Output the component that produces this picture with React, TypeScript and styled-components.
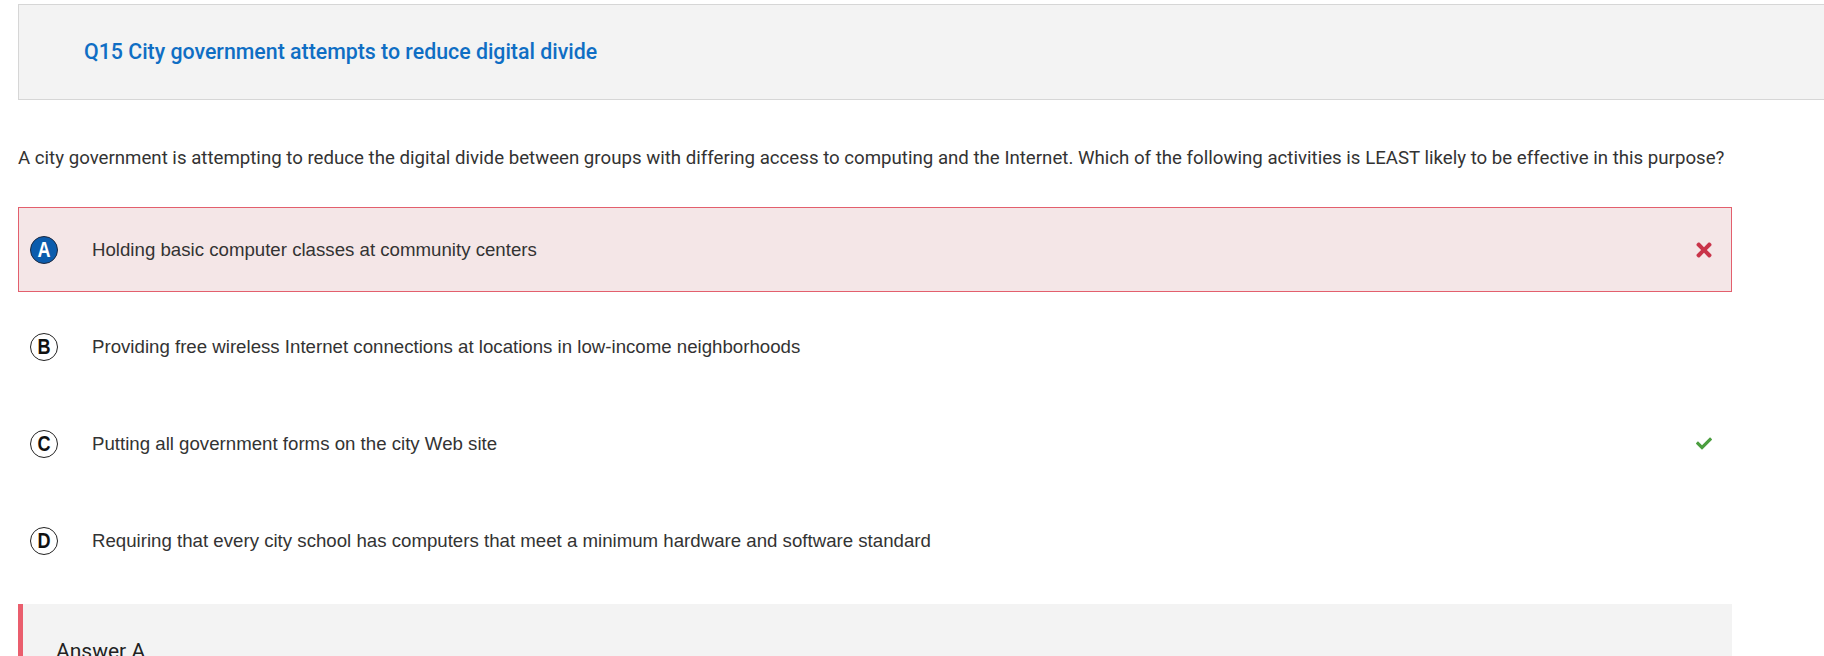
import React from "react";
import styled, { createGlobalStyle } from "styled-components";
import { FaTimes, FaCheck } from "react-icons/fa";

const GlobalStyle = createGlobalStyle`
  html, body {
    margin: 0;
    padding: 0;
    background: #ffffff;
    overflow: hidden;
  }
  body {
    font-family: Roboto, "Liberation Sans", Arial, sans-serif;
  }
`;

const Page = styled.div`
  display: flex;
  flex-direction: column;
  padding: 4px 0 0 18px;
`;

const Header = styled.div`
  display: flex;
  align-items: center;
  height: 94px;
  padding-left: 65px;
  background: #f3f3f3;
  border: 1px solid #d6d6d6;
  border-right: none;
`;

const Title = styled.h1`
  margin: 0;
  font-family: Roboto, "Liberation Sans", sans-serif;
  font-weight: 500;
  font-size: 21.33px;
  line-height: 26px;
  color: #0f6ec4;
`;

const Content = styled.div`
  width: 1714px;
  display: flex;
  flex-direction: column;
`;

const Question = styled.p`
  margin: 45px 0 35px;
  font-family: Roboto, "Liberation Sans", sans-serif;
  font-size: 18.67px;
  line-height: 27px;
  color: #333333;
`;

const OptionList = styled.div`
  display: flex;
  flex-direction: column;
  gap: 12px;
`;

const OptionRow = styled.div<{ $wrong?: boolean }>`
  display: flex;
  align-items: center;
  height: 85px;
  box-sizing: border-box;
  padding: 0 19px 0 11px;
  border: 1px solid ${(p) => (p.$wrong ? "#e35f6d" : "transparent")};
  background: ${(p) => (p.$wrong ? "#f4e6e7" : "transparent")};
`;

const Letter = styled.span<{ $selected?: boolean }>`
  flex: none;
  display: flex;
  align-items: center;
  justify-content: center;
  width: 28px;
  height: 28px;
  box-sizing: border-box;
  border-radius: 50%;
  border: 1.5px solid ${(p) => (p.$selected ? "#1c2940" : "#222222")};
  background: ${(p) => (p.$selected ? "#0b5cad" : "#ffffff")};
  color: ${(p) => (p.$selected ? "#ffffff" : "#111111")};
  font-family: "Liberation Sans", Arial, sans-serif;
  font-weight: 700;
  font-size: 22px;
  line-height: 1;
`;

const LetterGlyph = styled.span`
  display: inline-block;
  transform: scaleX(0.82);
`;

const OptionText = styled.span`
  flex: 1;
  margin-left: 34px;
  font-family: "Liberation Sans", Arial, sans-serif;
  font-size: 18.67px;
  color: #333333;
`;

const Mark = styled.span<{ $kind: "wrong" | "right" }>`
  flex: none;
  display: flex;
  align-items: center;
  justify-content: center;
  width: 16px;
  color: ${(p) => (p.$kind === "wrong" ? "#c9344a" : "#4b9e3f")};
`;

const AnswerBox = styled.div`
  margin-top: 21px;
  padding: 34px 33px;
  background: #f3f3f3;
  border-left: 5px solid #ea5e6d;
`;

const AnswerTitle = styled.div`
  font-family: Roboto, "Liberation Sans", sans-serif;
  font-size: 21px;
  line-height: 26px;
  color: #222222;
`;

type Option = {
  key: string;
  text: string;
  selected?: boolean;
  wrong?: boolean;
  correct?: boolean;
};

const options: Option[] = [
  { key: "A", text: "Holding basic computer classes at community centers", selected: true, wrong: true },
  { key: "B", text: "Providing free wireless Internet connections at locations in low-income neighborhoods" },
  { key: "C", text: "Putting all government forms on the city Web site", correct: true },
  { key: "D", text: "Requiring that every city school has computers that meet a minimum hardware and software standard" },
];

export default function App() {
  return (
    <>
      <GlobalStyle />
      <Page>
        <Header>
          <Title>Q15 City government attempts to reduce digital divide</Title>
        </Header>
        <Content>
          <Question>
            A city government is attempting to reduce the digital divide between groups with differing access to
            computing and the Internet. Which of the following activities is LEAST likely to be effective in this
            purpose?
          </Question>
          <OptionList>
            {options.map((o) => (
              <OptionRow key={o.key} $wrong={o.wrong}>
                <Letter $selected={o.selected}>
                  <LetterGlyph>{o.key}</LetterGlyph>
                </Letter>
                <OptionText>{o.text}</OptionText>
                {o.wrong && (
                  <Mark $kind="wrong">
                    <FaTimes size={22} />
                  </Mark>
                )}
                {o.correct && (
                  <Mark $kind="right">
                    <FaCheck size={17} />
                  </Mark>
                )}
              </OptionRow>
            ))}
          </OptionList>
          <AnswerBox>
            <AnswerTitle>Answer A</AnswerTitle>
          </AnswerBox>
        </Content>
      </Page>
    </>
  );
}
